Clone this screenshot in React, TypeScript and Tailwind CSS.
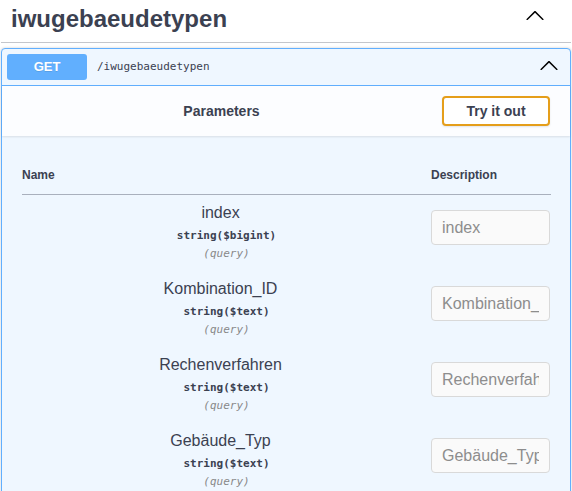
import React from "react";

const Arrow = ({ className }: { className?: string }) => (
  <svg width="20" height="20" viewBox="0 0 20 20" className={className} aria-hidden="true">
    <path
      fill="#000"
      d="M 17.418 14.908 C 17.69 15.176 18.127 15.176 18.397 14.908 C 18.667 14.64 18.668 14.207 18.397 13.939 L 10.489 6.109 C 10.219 5.841 9.782 5.841 9.51 6.109 L 1.602 13.939 C 1.332 14.207 1.332 14.64 1.602 14.908 C 1.873 15.176 2.311 15.176 2.581 14.908 L 10 7.767 L 17.418 14.908 Z"
    />
  </svg>
);

const params = [
  { name: "index", type: "string($bigint)" },
  { name: "Kombination_ID", type: "string($text)" },
  { name: "Rechenverfahren", type: "string($text)" },
  { name: "Gebäude_Typ", type: "string($text)" },
];

const mono = "font-['DejaVu_Sans_Mono',monospace]";

export default function App() {
  return (
    <div className="w-[572px] h-[491px] overflow-hidden bg-white px-[1px] font-['Liberation_Sans',Arial,sans-serif] text-[#3b4151]">
      <div className="flex items-start h-[43px] border-b border-[#c4c6cb]">
        <h3 className="ml-[10px] mt-[3px] text-[24px] leading-[32px] font-bold text-[#3b4151]">
          iwugebaeudetypen
        </h3>
        <Arrow className="ml-auto mr-[26px] mt-[5px]" />
      </div>

      <div className="mt-[5px] border border-[#61affe] rounded-[4px] bg-[#eff7ff] shadow-[0_0_3px_rgba(0,0,0,0.19)]">
        <div className="flex items-start p-[5px] border-b border-[#61affe]">
          <div className="w-[80px] h-[26px] rounded-[3px] bg-[#61affe] text-white font-bold text-[13px] flex items-center justify-center [text-shadow:0_1px_0_rgba(0,0,0,0.1)]">
            GET
          </div>
          <div className={`pl-[10px] h-[26px] flex items-center text-[11px] text-[#3b4151] ${mono}`}>
            /iwugebaeudetypen
          </div>
          <Arrow className="ml-auto mr-[6px] mt-[1px]" />
        </div>

        <div className="flex items-center h-[50px] px-[20px] bg-white/80 shadow-[0_1px_2px_rgba(0,0,0,0.1)]">
          <div className="flex-1 text-center pr-[21px] text-[14px] font-bold">Parameters</div>
          <button className="w-[108px] h-[30px] border-2 border-[#e59e1a] rounded-[4px] bg-white text-[14px] font-bold text-[#3b4151] shadow-[0_1px_2px_rgba(0,0,0,0.1)]">
            Try it out
          </button>
        </div>

        <div className="p-[20px] pr-[19px]">
          <div className="grid grid-cols-[409px_119px] py-[12px] border-b border-[#a9b0bd] text-[12px] leading-[14px] font-bold">
            <div>Name</div>
            <div>Description</div>
          </div>
          {params.map((p) => (
            <div key={p.name} className="grid grid-cols-[409px_119px] pt-[8px] pb-[9px]">
              <div className="flex flex-col items-center">
                <div className="pr-[12px] text-[16px] leading-[20px] text-[#3b4151]">{p.name}</div>
                <div className={`mt-[5px] text-[11px] leading-[16px] font-bold ${mono}`}>{p.type}</div>
                <div className={`mt-[2px] text-[11px] leading-[16px] italic text-[#888] ${mono}`}>(query)</div>
              </div>
              <div>
                <input
                  placeholder={p.name}
                  className="mt-[7px] w-[119px] h-[35px] px-[10px] border border-[#d9d9d9] rounded-[4px] bg-[#fafafa] text-[16px] text-[#3b4151] placeholder:text-[#8d8d8d] outline-none"
                />
              </div>
            </div>
          ))}
        </div>
      </div>
    </div>
  );
}
